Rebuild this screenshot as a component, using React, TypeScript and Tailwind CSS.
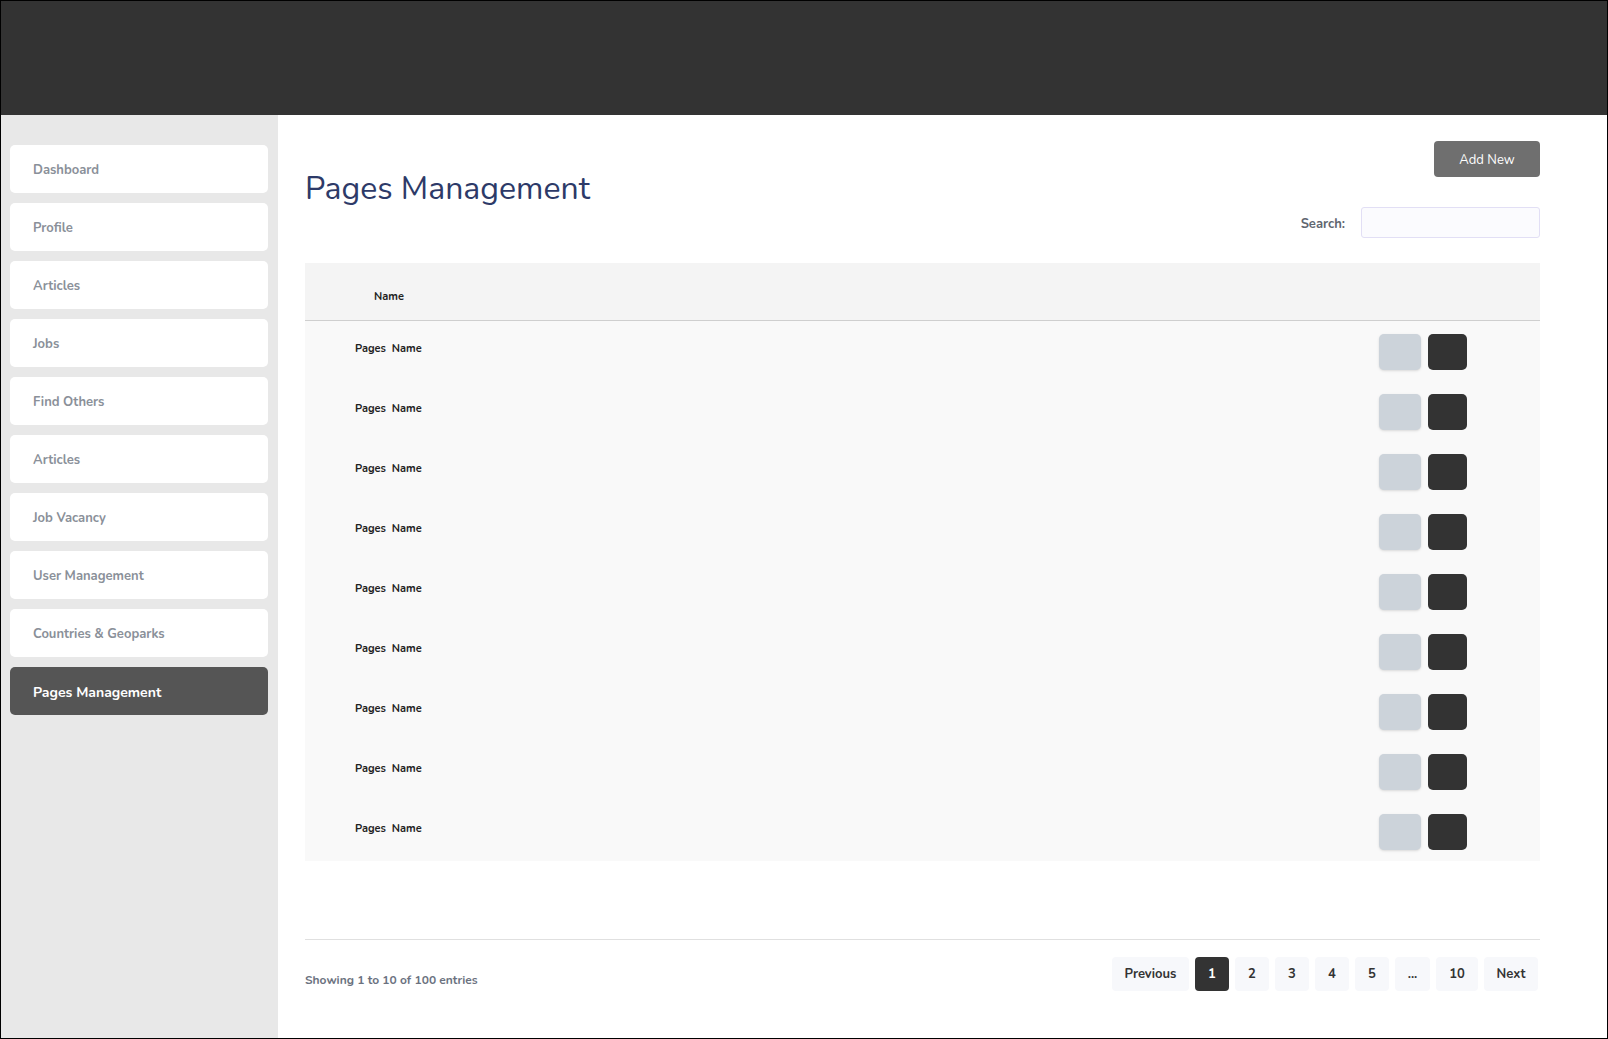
import React from "react";

const navItems = [
  "Dashboard",
  "Profile",
  "Articles",
  "Jobs",
  "Find Others",
  "Articles",
  "Job Vacancy",
  "User Management",
  "Countries & Geoparks",
];

export default function App() {
  const rows = Array.from({ length: 9 });
  const pages = [
    { label: "Previous", w: "w-[77px]" },
    { label: "1", w: "w-[34px]", active: true },
    { label: "2", w: "w-[34px]" },
    { label: "3", w: "w-[34px]" },
    { label: "4", w: "w-[34px]" },
    { label: "5", w: "w-[34px]" },
    { label: "...", w: "w-[35px]" },
    { label: "10", w: "w-[42px]" },
    { label: "Next", w: "w-[54px]" },
  ];
  return (
    <div className="w-[1608px] h-[1039px] border border-black bg-white flex flex-col overflow-hidden font-['Nunito','Lato',sans-serif]">
      <div className="h-[114px] bg-[#333333] shrink-0" />
      <div className="flex flex-1 min-h-0">
        <aside className="w-[277px] shrink-0 bg-[#e8e8e8] pt-[30px] pl-[9px] pr-[10px] flex flex-col gap-[10px]">
          {navItems.map((n, i) => (
            <div
              key={i}
              className="h-[48px] rounded-[5px] bg-white pl-[23px] pt-[3px] flex items-center text-[13px] font-bold text-[#8a9099]"
            >
              {n}
            </div>
          ))}
          <div className="h-[48px] rounded-[5px] bg-[#555555] pl-[23px] pt-[3px] flex items-center text-[14px] font-bold text-white">
            Pages Management
          </div>
        </aside>
        <main className="flex-1 pl-[27px] pr-[67px] pt-[26px] flex flex-col">
          <div className="flex justify-between items-start">
            <h1 className="mt-[29px] text-[32px] leading-[38px] text-[#2d3a68] font-normal">
              Pages Management
            </h1>
            <div className="flex flex-col items-end">
              <button className="w-[106px] h-[36px] pt-[3px] bg-[#6f6f6f] rounded-[4px] text-white text-[13px]">
                Add New
              </button>
              <div className="mt-[30px] flex items-center">
                <span className="pt-[4px] text-[13px] font-bold text-[#5f6670]">Search:</span>
                <input className="ml-[16px] w-[179px] h-[31px] border border-[#e2dff5] bg-[#fbfbfe] rounded-[3px] outline-none" />
              </div>
            </div>
          </div>

          <div className="mt-[25px]">
            <div className="h-[58px] bg-[#f4f4f4] border-b border-[#cfcfcf] flex items-center pt-[11px] pl-[69px] text-[11px] font-bold text-[#222]">
              Name
            </div>
            {rows.map((_, i) => (
              <div key={i} className="h-[60px] bg-[#f9f9f9] flex items-start">
                <div className="mt-[20px] leading-[16px] pl-[50px] text-[11px] font-bold text-[#222] whitespace-pre">
                  {"Pages  Name"}
                </div>
                <div className="ml-auto mr-[73px] mt-[13px] flex gap-[7px]">
                  <div className="w-[42px] h-[36px] bg-[#ccd3da] rounded-[5px] shadow-sm" />
                  <div className="w-[39px] h-[36px] bg-[#333333] rounded-[5px]" />
                </div>
              </div>
            ))}
          </div>

          <div className="mt-[78px] border-t border-[#e0e0e0] flex items-start">
            <div className="mt-[32px] leading-[16px] text-[12px] font-bold text-[#6b7280]">
              Showing 1 to 10 of 100 entries
            </div>
            <div className="ml-auto mr-[2px] mt-[17px] flex gap-[6px]">
              {pages.map((p, i) => (
                <div
                  key={i}
                  className={
                    p.w +
                    " h-[34px] pt-[2px] rounded-[4px] flex items-center justify-center text-[13px] font-bold " +
                    (p.active ? "bg-[#333333] text-white" : "bg-[#f7f8fb] text-[#333]")
                  }
                >
                  {p.label}
                </div>
              ))}
            </div>
          </div>
        </main>
      </div>
    </div>
  );
}
